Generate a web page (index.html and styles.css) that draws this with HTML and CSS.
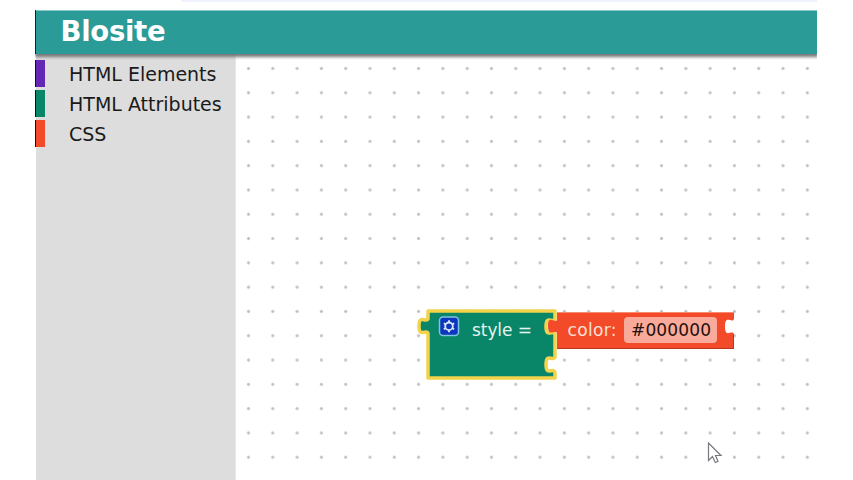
FILE: index.html
```html
<!DOCTYPE html>
<html lang="en">
<head>
<meta charset="utf-8">
<title>Blosite</title>
<link rel="stylesheet" href="styles.css">
</head>
<body>
<div class="top-strip"></div>
<div class="app">
  <header class="header"><h1 class="brand">Blosite</h1></header>
  <main class="main">
    <nav class="toolbox">
      <div class="category elements"><span>HTML Elements</span></div>
      <div class="category attributes"><span>HTML Attributes</span></div>
      <div class="category css"><span>CSS</span></div>
    </nav>
    <section class="workspace">
      <svg class="blocks" width="324" height="76" viewBox="414 306 324 76">
        <path class="style-block" d="M428 311H555V319c-2 5-9-5-9 7.500s7 2.500 9 7.500V357c-2 5-9-5-9 7.500s7 2.500 9 7.500V378H428V333c-2-4-9 5-9-7s7-3 9-7Z"/>
        <path class="css-block" d="M557 312H734V319c-2 5-9-5-9 7.500s7 2.500 9 7.500V349H557V333c-2-4-9 5-9-7s7-2 9-6Z"/>
        <path class="edge-light" d="M557 312.500H734"/>
        <path class="edge-dark" d="M557 348.500H733.500V335"/>
        <rect class="gear-box" x="439.500" y="317" width="19" height="18.500" rx="3.500"/>
        <g class="gear">
          <circle cx="449" cy="326.300" r="3.800"/>
          <path d="M449 320.300v2M449 330.300v2M443.800 323.300l1.700 1M452.500 328.300l1.700 1M443.800 329.300l1.700-1M452.500 324.300l1.700-1"/>
        </g>
        <text class="label" x="472" y="336" textLength="60">style =</text>
        <text class="label warm" x="567.500" y="336" textLength="49">color:</text>
        <rect class="field" x="624" y="317" width="93" height="26" rx="4"/>
        <text class="value" x="631" y="336" textLength="80">#000000</text>
      </svg>
      <svg class="cursor" width="16" height="22" viewBox="0 0 16 22"><path d="M1.500 1V18.500L5.500 14.500L8.300 20.500L11 19.300L8.500 13.500H14Z"/></svg>
    </section>
  </main>
</div>
</body>
</html>
```
FILE: styles.css
```css
* { box-sizing: border-box; }
body {
  margin: 0;
  height: 480px;
  overflow: hidden;
  background: #fff;
  font-family: "DejaVu Sans", Verdana, sans-serif;
}
.top-strip { height: 10px; margin: 0 36px 0 181px; background: linear-gradient(#f1f3fc 2px, #fff 2px); }
.app { width: 781px; height: 470px; margin-left: 36px; display: flex; flex-direction: column; }
.header {
  position: relative;
  z-index: 1;
  flex: none;
  height: 44px;
  padding-left: 24.500px;
  display: flex;
  align-items: center;
  background: #2b9b97;
  border-top: 1px solid #8bcac8;
  box-shadow: -1px 0 #123, 0 2px 3px 1px #777;
  clip-path: inset(0 0 -6px -1px);
}
.brand { margin: 0 0 4px; color: #fff; font-weight: bold; font-size: 27.500px; line-height: 38px; letter-spacing: -0.300px; }
.main { flex: 1; display: flex; min-height: 0; }
.toolbox { width: 200px; padding-top: 6px; background: #ddd; border-right: 1px solid #e8e8e8; }
.category {
  height: 27px;
  margin-bottom: 3px;
  padding-left: 23px;
  display: flex;
  align-items: center;
  border-left: 9.500px solid;
  box-shadow: -1px 0 #111;
  font-size: 19px;
  white-space: nowrap;
}
.category span { padding: 1px 0 0 1px; color: #1a1a1a; }
.elements { border-color: #6327b4; }
.attributes { border-color: #098568; }
.css { border-color: #f34b29; }
.workspace {
  position: relative;
  flex: 1;
  background: radial-gradient(circle, #bbb 0.8px, #e6e6e6 1.600px, transparent 2.200px) 0.350px 2.350px / 24.300px 24.300px #fff;
}
.blocks { position: absolute; left: 178px; top: 252px; }
.style-block { fill: #098568; stroke: #f2d34b; stroke-width: 3.500; stroke-linejoin: round; }
.css-block { fill: #f34b29; }
.edge-light { stroke: #f88b70; }
.edge-dark { stroke: #b93720; fill: none; }
.gear-box { fill: #0b36bd; stroke: #7ec3df; stroke-width: 1.500; }
.gear { fill: none; stroke: #dbe8ff; stroke-width: 1.800; }
.label, .value { font-size: 17px; fill: #e4f4ef; }
.warm { fill: #fde0d3; }
.value { fill: #24100c; }
.field { fill: #f9aa9a; }
.cursor { position: absolute; left: 471px; top: 388px; }
.cursor path { fill: #fff; stroke: #777780; stroke-width: 1.200; }
```
